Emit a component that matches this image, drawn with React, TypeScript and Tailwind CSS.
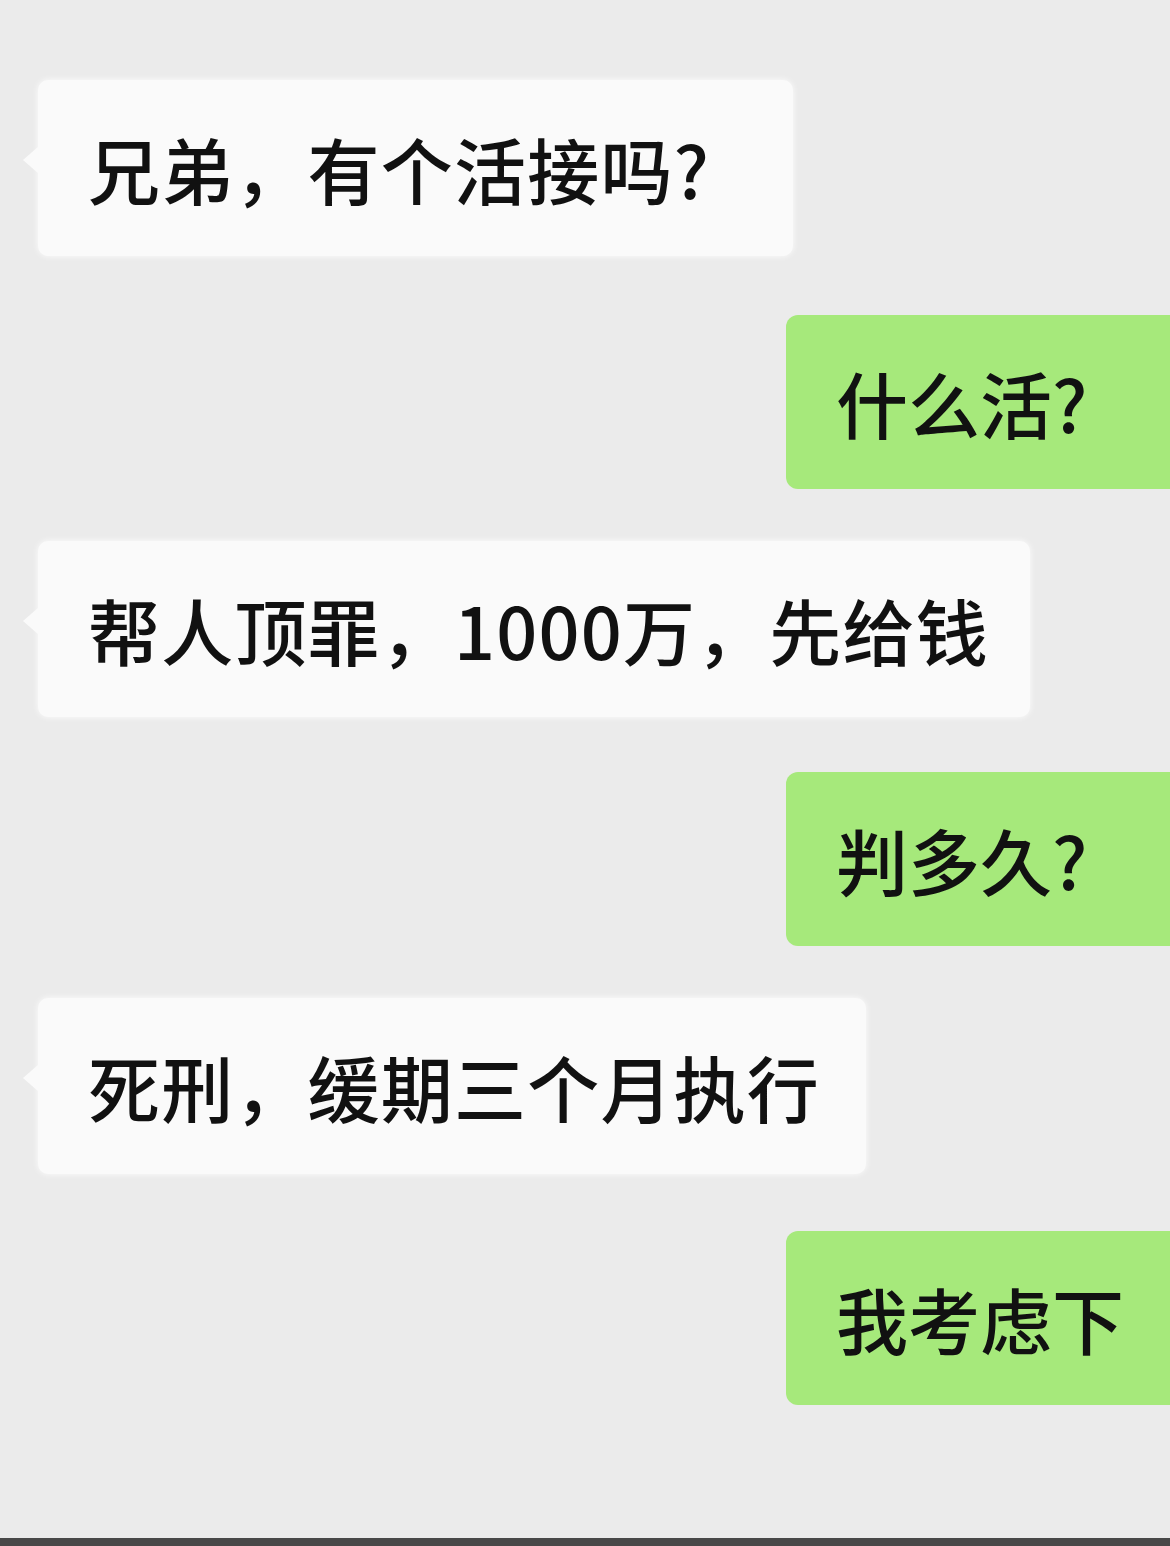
import React from "react";

const font = { fontFamily: '"Noto Sans CJK SC", "Noto Sans", sans-serif' };

function Left({ text, width, mt }: { text: string; width: string; mt: string }) {
  return (
    <div className={`relative ml-[38px] ${mt} ${width} h-[176px] rounded-[10px] bg-[#fafafa] flex items-center pl-[50px] shadow-[0_0_6px_rgba(255,255,255,0.9)]`}>
      <div className="absolute left-[-15px] top-[66px] w-0 h-0 border-y-[14px] border-y-transparent border-r-[16px] border-r-[#fafafa]" />
      <span className="text-[72px] leading-none font-medium text-[#111111] whitespace-nowrap tracking-[1.2px]">{text}</span>
    </div>
  );
}

function Right({ text, mt }: { text: string; mt: string }) {
  return (
    <div className={`ml-[786px] ${mt} w-[420px] h-[174px] rounded-[12px] bg-[#a6e97b] flex items-center pl-[50px]`}>
      <span className="text-[72px] leading-none font-medium text-[#111111] whitespace-nowrap">{text}</span>
    </div>
  );
}

export default function App() {
  return (
    <div className="w-[1170px] h-[1546px] bg-[#ebebeb] overflow-hidden flex flex-col" style={font}>
      <Left text="兄弟，有个活接吗?" width="w-[755px]" mt="mt-[80px]" />
      <Right text="什么活?" mt="mt-[59px]" />
      <Left text="帮人顶罪，1000万，先给钱" width="w-[992px]" mt="mt-[52px]" />
      <Right text="判多久?" mt="mt-[55px]" />
      <Left text="死刑，缓期三个月执行" width="w-[828px]" mt="mt-[52px]" />
      <Right text="我考虑下" mt="mt-[57px]" />
      <div className="flex-1" />
      <div className="h-[8px] bg-[#484848]" />
    </div>
  );
}
